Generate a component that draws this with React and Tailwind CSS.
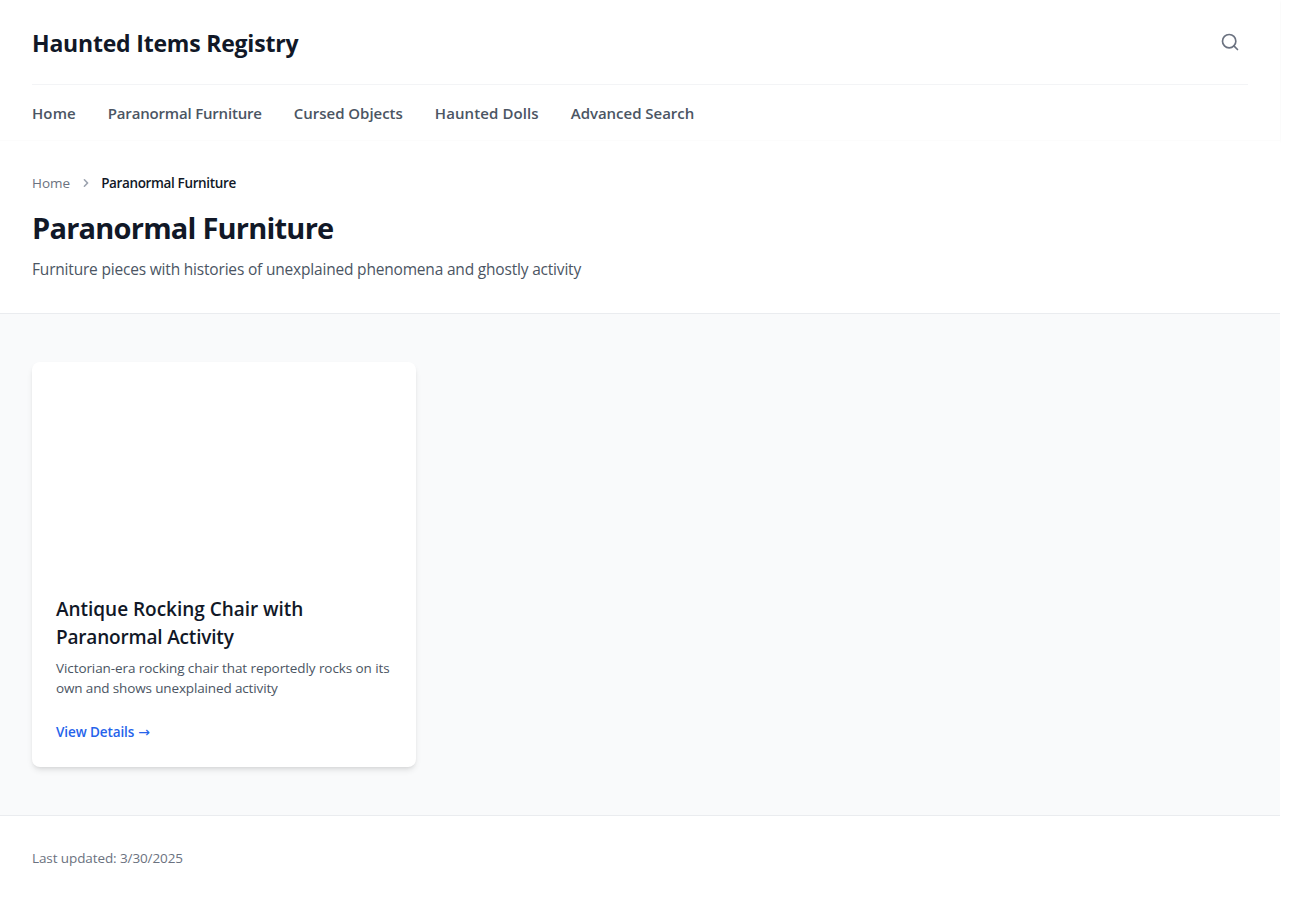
import { Search } from "lucide-react";

const links = [
  { label: "Home", style: "tracking-[0.1px]" },
  { label: "Paranormal Furniture", style: "tracking-[-0.18px]" },
  { label: "Cursed Objects", style: "tracking-[-0.03px]" },
  { label: "Haunted Dolls", style: "tracking-[0.1px]" },
  { label: "Advanced Search", style: "tracking-[-0.03px]" },
];

function Chevron() {
  return (
    <svg viewBox="0 0 20 20" fill="currentColor" className="mx-2 h-4 w-4 text-[#9ca3af]" aria-hidden="true">
      <path
        fillRule="evenodd"
        clipRule="evenodd"
        d="M7.293 14.707a1 1 0 010-1.414L10.586 10 7.293 6.707a1 1 0 011.414-1.414l4 4a1 1 0 010 1.414l-4 4a1 1 0 01-1.414 0z"
      />
    </svg>
  );
}

function Header() {
  return (
    <header className="border-b border-[#fcfcfc] bg-white px-8 shadow-[0_1px_2px_0_rgb(0_0_0/0.05)]">
      <div className="flex h-[85px] items-center justify-between border-b border-[#f3f4f6]">
        <a href="#" className="mt-0.5 text-[23px] leading-8 font-bold tracking-[-0.2px] whitespace-nowrap text-[#111827]">
          Haunted Items Registry
        </a>
        <button aria-label="Search" className="p-2 text-[#6b7280]">
          <Search size={20} />
        </button>
      </div>
      <nav className="flex gap-8 pt-4 pb-[15px]">
        {links.map((link) => (
          <a key={link.label} href="#" className={`text-[15px] leading-6 font-semibold whitespace-nowrap text-[#4b5563] ${link.style}`}>
            {link.label}
          </a>
        ))}
      </nav>
    </header>
  );
}

function PageTitle() {
  return (
    <section className="h-[173px] border-b border-[#eaecef] bg-white px-8 pt-8">
      <div className="flex h-5 items-center text-[13.5px] leading-5">
        <a href="#" className="text-[#6b7280]">Home</a>
        <Chevron />
        <span className="-ml-px font-semibold tracking-[-0.36px] whitespace-nowrap text-[#111827]">Paranormal Furniture</span>
      </div>
      <h1 className="mt-[17px] text-[29px] leading-9 font-bold tracking-[-0.78px] text-[#111827]">
        Paranormal Furniture
      </h1>
      <p className="mt-[11px] text-[15.5px] leading-6 tracking-[-0.19px] text-[#4b5563]">
        Furniture pieces with histories of unexplained phenomena and ghostly activity
      </p>
    </section>
  );
}

function ItemCard() {
  return (
    <article className="h-[405px] w-96 overflow-hidden rounded-lg bg-white shadow-md">
      <div className="h-[209px]" />
      <div className="p-6">
        <h2 className="text-[19px] leading-7 font-semibold text-[#111827]">
          <span className="tracking-[-0.03px] whitespace-nowrap">Antique Rocking Chair with</span>
          <br />
          <span className="tracking-[-0.18px]">Paranormal Activity</span>
        </h2>
        <p className="mt-[7px] text-[13.5px] leading-5 text-[#4b5563]">
          <span className="tracking-[-0.085px] whitespace-nowrap">Victorian-era rocking chair that reportedly rocks on its</span>
          <br />
          <span className="tracking-[-0.14px]">own and shows unexplained activity</span>
        </p>
        <a href="#" className="mt-6 flex text-[13.5px] leading-5 font-semibold tracking-[-0.1px] text-[#2563eb]">
          View Details
          <span className="ml-[4px] font-['DejaVu_Sans',sans-serif] text-[14px] font-normal">→</span>
        </a>
      </div>
    </article>
  );
}

export default function App() {
  return (
    <div className="min-h-[899px] bg-white font-['Open_Sans',sans-serif]">
      <div className="w-[1280px]">
        <Header />
        <PageTitle />
        <main className="bg-[#f9fafb] px-8 py-12">
          <ItemCard />
        </main>
        <footer className="border-t border-[#eaecef] px-8 py-8">
          <p className="text-[13.5px] leading-5 tracking-[-0.1px] text-[#6b7280]">Last updated: 3/30/2025</p>
        </footer>
      </div>
    </div>
  );
}
